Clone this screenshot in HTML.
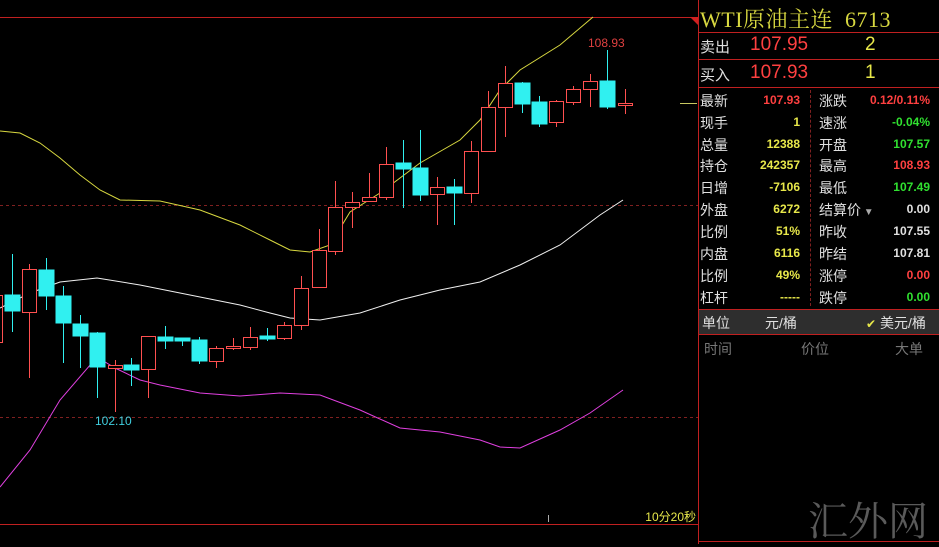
<!DOCTYPE html>
<html><head><meta charset="utf-8"><style>
body{margin:0;background:#000;width:939px;height:544px;overflow:hidden;position:relative;font-family:"Liberation Sans","Noto Sans CJK SC",sans-serif}
.p{position:absolute;white-space:nowrap}
.l{font-size:14px;color:#e0e0e0}
.v{font-size:12px;font-weight:bold;text-align:right}
.y{color:#e8e84a}.r{color:#ff4040}.g{color:#30e030}.w{color:#e0e0e0}
.hl{position:absolute;height:1px;background:#c02020;left:699px;width:240px}
</style></head><body>
<svg width="939" height="544" style="position:absolute;left:0;top:0">
<line x1="0" y1="17.5" x2="698" y2="17.5" stroke="#c02020"/>
<line x1="698.5" y1="0" x2="698.5" y2="544" stroke="#c02020"/>
<line x1="0" y1="524.5" x2="698" y2="524.5" stroke="#c02020"/>
<line x1="698" y1="541.5" x2="939" y2="541.5" stroke="#c02020"/>
<polygon points="690,17 698,17 698,25" fill="#d02020"/>
<line x1="0" y1="205.5" x2="698" y2="205.5" stroke="#802020" stroke-dasharray="3,3"/>
<line x1="0" y1="417.5" x2="698" y2="417.5" stroke="#802020" stroke-dasharray="3,3"/>
<line x1="680" y1="103.5" x2="697" y2="103.5" stroke="#c8c860"/>
<line x1="548.5" y1="515" x2="548.5" y2="522" stroke="#aaa"/>
<polyline fill="none" stroke="#d8d840" stroke-width="1" points="0,131 20,133 40,143 60,158 80,175 100,190 120,200 160,201 200,210 240,225 270,240 290,250 310,252 330,245 350,212 380,193 420,163 460,140 480,120 500,90 520,70 560,45 593,17"/>
<polyline fill="none" stroke="#f0f0f0" stroke-width="1" points="0,308 30,293 60,282 97,278 140,285 200,297 240,305 270,313 290,318 320,320 360,313 400,300 440,290 480,282 520,265 560,245 600,215 623,200"/>
<polyline fill="none" stroke="#e040e0" stroke-width="1" points="0,487 30,450 60,400 97,357 115,368 140,380 160,385 200,393 240,396 280,393 320,395 360,410 400,428 440,432 480,440 500,447 520,448 560,430 590,413 623,390"/>
<g stroke-width="1">
<g stroke="#ff5050" fill="none">
<rect x="-5.5" y="295.5" width="8" height="47"/>
<line x1="29.5" y1="264" x2="29.5" y2="378"/><rect x="22.5" y="269.5" width="14" height="43" fill="#000"/>
<line x1="115.5" y1="360" x2="115.5" y2="412"/><rect x="108.5" y="365.5" width="14" height="3" fill="#000"/>
<line x1="148.5" y1="336" x2="148.5" y2="398"/><rect x="141.5" y="336.5" width="14" height="33" fill="#000"/>
<line x1="216.5" y1="346" x2="216.5" y2="368"/><rect x="209.5" y="348.5" width="14" height="13" fill="#000"/>
<line x1="233.5" y1="338" x2="233.5" y2="350"/><rect x="226.5" y="346.5" width="14" height="2" fill="#000"/>
<line x1="250.5" y1="327" x2="250.5" y2="350"/><rect x="243.5" y="337.5" width="14" height="10" fill="#000"/>
<line x1="284.5" y1="322" x2="284.5" y2="340"/><rect x="277.5" y="325.5" width="14" height="13" fill="#000"/>
<line x1="301.5" y1="276" x2="301.5" y2="330"/><rect x="294.5" y="288.5" width="14" height="37" fill="#000"/>
<line x1="319.5" y1="229" x2="319.5" y2="287"/><rect x="312.5" y="250.5" width="14" height="37" fill="#000"/>
<line x1="335.5" y1="181" x2="335.5" y2="255"/><rect x="328.5" y="207.5" width="14" height="44" fill="#000"/>
<line x1="352.5" y1="192" x2="352.5" y2="228"/><rect x="345.5" y="202.5" width="14" height="5" fill="#000"/>
<line x1="369.5" y1="173" x2="369.5" y2="202"/><rect x="362.5" y="197.5" width="14" height="4" fill="#000"/>
<line x1="386.5" y1="147" x2="386.5" y2="200"/><rect x="379.5" y="164.5" width="14" height="33" fill="#000"/>
<line x1="437.5" y1="177" x2="437.5" y2="225"/><rect x="430.5" y="187.5" width="14" height="7" fill="#000"/>
<line x1="471.5" y1="141" x2="471.5" y2="203"/><rect x="464.5" y="151.5" width="14" height="42" fill="#000"/>
<line x1="488.5" y1="91" x2="488.5" y2="151"/><rect x="481.5" y="107.5" width="14" height="44" fill="#000"/>
<line x1="505.5" y1="66" x2="505.5" y2="137"/><rect x="498.5" y="83.5" width="14" height="24" fill="#000"/>
<line x1="556.5" y1="100" x2="556.5" y2="127"/><rect x="549.5" y="101.5" width="14" height="21" fill="#000"/>
<line x1="573.5" y1="86" x2="573.5" y2="105"/><rect x="566.5" y="89.5" width="14" height="13" fill="#000"/>
<line x1="590.5" y1="74" x2="590.5" y2="107"/><rect x="583.5" y="81.5" width="14" height="8" fill="#000"/>
<line x1="625.5" y1="89" x2="625.5" y2="114"/><rect x="618.5" y="103.5" width="14" height="2" fill="#000"/>
</g>
<g stroke="#30f0f0" fill="#30f0f0">
<line x1="12.5" y1="254" x2="12.5" y2="332"/><rect x="5" y="295" width="15" height="16"/>
<line x1="46.5" y1="258" x2="46.5" y2="310"/><rect x="39" y="270" width="15" height="26"/>
<line x1="63.5" y1="286" x2="63.5" y2="363"/><rect x="56" y="296" width="15" height="27"/>
<line x1="80.5" y1="315" x2="80.5" y2="368"/><rect x="73" y="324" width="15" height="12"/>
<line x1="97.5" y1="332" x2="97.5" y2="398"/><rect x="90" y="333" width="15" height="34"/>
<line x1="131.5" y1="358" x2="131.5" y2="386"/><rect x="124" y="365" width="15" height="5"/>
<line x1="165.5" y1="326" x2="165.5" y2="349"/><rect x="158" y="337" width="15" height="4"/>
<line x1="182.5" y1="338" x2="182.5" y2="346"/><rect x="175" y="338" width="15" height="3"/>
<line x1="199.5" y1="337" x2="199.5" y2="364"/><rect x="192" y="340" width="15" height="21"/>
<line x1="267.5" y1="328" x2="267.5" y2="341"/><rect x="260" y="336" width="15" height="3"/>
<line x1="403.5" y1="140" x2="403.5" y2="208"/><rect x="396" y="163" width="15" height="6"/>
<line x1="420.5" y1="130" x2="420.5" y2="201"/><rect x="413" y="168" width="15" height="27"/>
<line x1="454.5" y1="179" x2="454.5" y2="225"/><rect x="447" y="187" width="15" height="6"/>
<line x1="522.5" y1="82" x2="522.5" y2="113"/><rect x="515" y="83" width="15" height="21"/>
<line x1="539.5" y1="96" x2="539.5" y2="127"/><rect x="532" y="102" width="15" height="22"/>
<line x1="607.5" y1="50" x2="607.5" y2="109"/><rect x="600" y="81" width="15" height="26"/>
</g></g>
<text x="95" y="425" font-size="12" fill="#40d0e0" font-family="Liberation Sans">102.10</text>
<text x="588" y="47" font-size="12" fill="#e04040" font-family="Liberation Sans">108.93</text>
<text x="696" y="521" font-size="12" fill="#e8e84a" text-anchor="end" font-family="Liberation Sans,Noto Sans CJK SC">10分20秒</text>
</svg>
<div class="hl" style="top:32px"></div><div class="hl" style="top:59px"></div><div class="hl" style="top:87px"></div>
<div class="hl" style="top:309px"></div><div class="hl" style="top:334px"></div>
<div class="p" style="left:700px;top:3px;font-size:22px;letter-spacing:0.5px;color:#d8d840;font-family:'Liberation Serif','Noto Serif CJK SC',serif">WTI原油主连&nbsp; 6713</div>
<div class="p l" style="left:700px;top:36px;font-size:15px">卖出</div>
<div class="p r" style="left:750px;top:34px;font-size:19px">107.95</div>
<div class="p y" style="left:865px;top:34px;font-size:19px">2</div>
<div class="p l" style="left:700px;top:64px;font-size:15px">买入</div>
<div class="p r" style="left:750px;top:62px;font-size:19px">107.93</div>
<div class="p y" style="left:865px;top:62px;font-size:19px">1</div>
<div style="position:absolute;left:810px;top:90px;height:216px;border-left:1px dashed #802020"></div>
<div style="position:absolute;left:699px;top:310px;width:240px;height:24px;background:#2e2e2e"></div>
<div class="p l" style="left:702px;top:313px">单位</div>
<div class="p l" style="left:765px;top:313px">元/桶</div>
<div class="p l" style="left:866px;top:313px"><span class="y" style="font-size:12px">✔</span> 美元/桶</div>
<div class="p" style="left:704px;top:339px;font-size:14px;color:#777">时间</div>
<div class="p" style="left:801px;top:339px;font-size:14px;color:#777">价位</div>
<div class="p" style="left:895px;top:339px;font-size:14px;color:#777">大单</div>
<div class="p" style="left:808px;top:490px;font-size:40px;color:#5a5a5a;font-family:'Noto Serif CJK SC',serif">汇外网</div>
<div style="position:absolute;left:0;top:0">
<div class="p l" style="left:700px;top:91px">最新</div><div class="p v r" style="left:740px;width:60px;top:93px">107.93</div>
<div class="p l" style="left:819px;top:91px">涨跌</div><div class="p v r" style="left:850px;width:80px;top:93px">0.12/0.11%</div>
<div class="p l" style="left:700px;top:113px">现手</div><div class="p v y" style="left:740px;width:60px;top:115px">1</div>
<div class="p l" style="left:819px;top:113px">速涨</div><div class="p v g" style="left:850px;width:80px;top:115px">-0.04%</div>
<div class="p l" style="left:700px;top:135px">总量</div><div class="p v y" style="left:740px;width:60px;top:137px">12388</div>
<div class="p l" style="left:819px;top:135px">开盘</div><div class="p v g" style="left:850px;width:80px;top:137px">107.57</div>
<div class="p l" style="left:700px;top:156px">持仓</div><div class="p v y" style="left:740px;width:60px;top:158px">242357</div>
<div class="p l" style="left:819px;top:156px">最高</div><div class="p v r" style="left:850px;width:80px;top:158px">108.93</div>
<div class="p l" style="left:700px;top:178px">日增</div><div class="p v y" style="left:740px;width:60px;top:180px">-7106</div>
<div class="p l" style="left:819px;top:178px">最低</div><div class="p v g" style="left:850px;width:80px;top:180px">107.49</div>
<div class="p l" style="left:700px;top:200px">外盘</div><div class="p v y" style="left:740px;width:60px;top:202px">6272</div>
<div class="p l" style="left:819px;top:200px">结算价<span style="color:#aaa;font-size:10px"> ▼</span></div><div class="p v w" style="left:850px;width:80px;top:202px">0.00</div>
<div class="p l" style="left:700px;top:222px">比例</div><div class="p v y" style="left:740px;width:60px;top:224px">51%</div>
<div class="p l" style="left:819px;top:222px">昨收</div><div class="p v w" style="left:850px;width:80px;top:224px">107.55</div>
<div class="p l" style="left:700px;top:244px">内盘</div><div class="p v y" style="left:740px;width:60px;top:246px">6116</div>
<div class="p l" style="left:819px;top:244px">昨结</div><div class="p v w" style="left:850px;width:80px;top:246px">107.81</div>
<div class="p l" style="left:700px;top:266px">比例</div><div class="p v y" style="left:740px;width:60px;top:268px">49%</div>
<div class="p l" style="left:819px;top:266px">涨停</div><div class="p v r" style="left:850px;width:80px;top:268px">0.00</div>
<div class="p l" style="left:700px;top:288px">杠杆</div><div class="p v y" style="left:740px;width:60px;top:290px">-----</div>
<div class="p l" style="left:819px;top:288px">跌停</div><div class="p v g" style="left:850px;width:80px;top:290px">0.00</div>
</div>
</body></html>
